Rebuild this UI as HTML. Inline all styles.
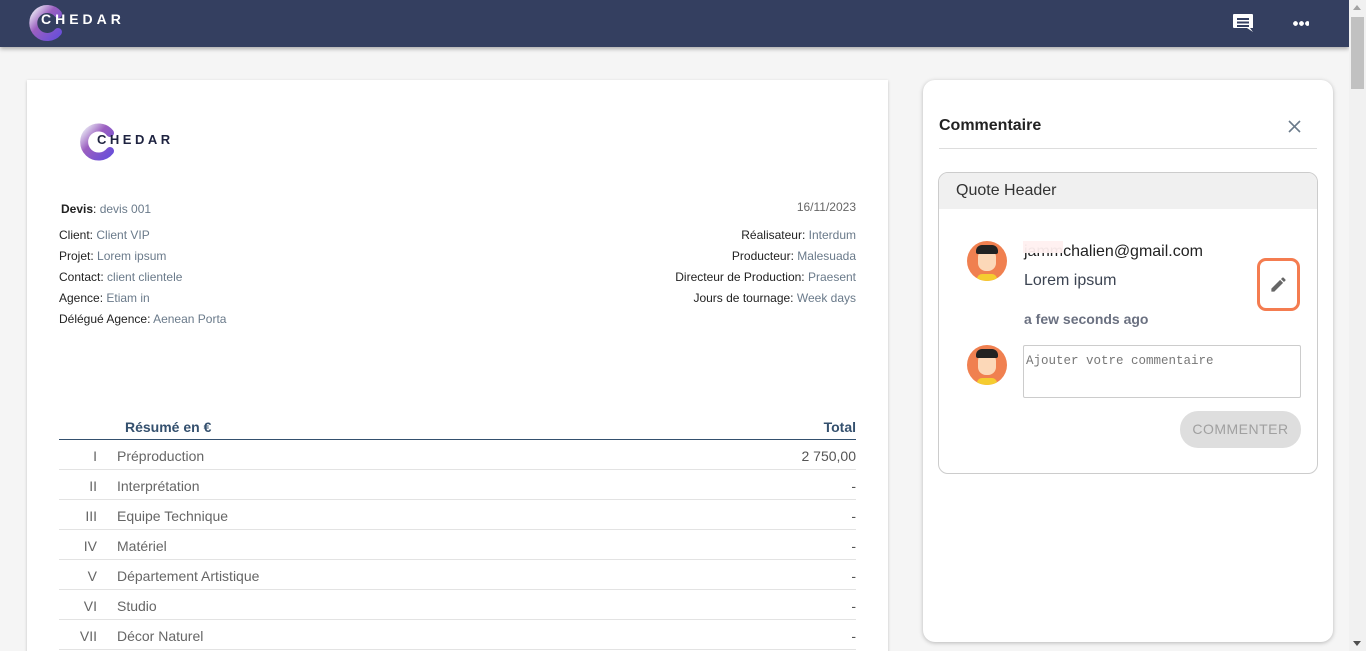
<!DOCTYPE html>
<html><head><meta charset="utf-8"><style>
*{box-sizing:border-box;margin:0;padding:0}
html,body{width:1366px;height:651px;overflow:hidden}
body{background:#f5f5f5;font-family:"Liberation Sans",Roboto,sans-serif;position:relative;color:#333}
.hdr{position:absolute;left:0;top:0;width:1349px;height:47px;background:#343f60;box-shadow:0 2px 4px rgba(0,0,0,.3)}
.sb{position:absolute;right:0;top:0;width:17px;height:651px;background:#f1f1f1}
.sb .th{position:absolute;left:2px;top:17px;width:13px;height:72px;background:#c1c1c1}
.card{position:absolute;left:27px;top:80px;width:861px;height:600px;background:#fff;box-shadow:0 1px 3px rgba(0,0,0,.2)}
.side{position:absolute;left:923px;top:80px;width:410px;height:562px;background:#fff;border-radius:12px;box-shadow:0 1px 4px rgba(0,0,0,.25)}
.t{position:absolute;font-size:12px;color:#222;white-space:nowrap}
.t span{color:#6a7a8a}
.r{text-align:right}
.row{position:absolute;left:59px;width:797px;height:30px;border-bottom:1px solid #e3e3e3;font-size:14px;color:#666}
.row .n{position:absolute;right:759px;top:8px}
.row .l{position:absolute;left:58px;top:8px}
.row .v{position:absolute;right:0;top:8px;color:#555}
</style></head><body>
<div class="hdr">
<svg style="position:absolute;left:25px;top:2px" width="42" height="42" viewBox="0 0 42 42"><defs><linearGradient id="g" x1="0" y1="0" x2="1" y2="1"><stop offset="0" stop-color="#e8e8f4"/><stop offset=".4" stop-color="#9b5fc0"/><stop offset="1" stop-color="#6a4fd8"/></linearGradient></defs><path d="M33 12 A14 14 0 1 0 33 30" fill="none" stroke="url(#g)" stroke-width="8" stroke-linecap="round"/></svg>
<div style="position:absolute;left:41px;top:11px;color:#fff;font-size:14px;font-weight:bold;letter-spacing:4px">CHEDAR</div>
<svg style="position:absolute;left:1233px;top:14px" width="20" height="19" viewBox="0 0 20 19"><path d="M1 0h18a1 1 0 0 1 1 1v13h-3l3 4-6-4H1a1 1 0 0 1-1-1V1a1 1 0 0 1 1-1z" fill="#fff"/><rect x="4" y="4" width="12" height="2" fill="#343f60"/><rect x="4" y="7.5" width="12" height="2" fill="#343f60"/><rect x="4" y="11" width="12" height="2" fill="#343f60"/></svg>
<div style="position:absolute;left:1293px;top:21px;width:16px;height:5px;background:radial-gradient(circle at 2.5px 2.5px,#fff 2.2px,transparent 2.5px) 0 0/6px 5px repeat-x"></div>
</div>
<div class="sb"><div class="th"></div><div style="position:absolute;left:4px;top:5px;border:4px solid transparent;border-bottom:5px solid #a3a3a3;border-top:0"></div><div style="position:absolute;left:4px;bottom:5px;border:4px solid transparent;border-top:5px solid #505050;border-bottom:0"></div></div>
<div class="card">
<svg style="position:absolute;left:49px;top:40px" width="44" height="44" viewBox="0 0 44 44"><path d="M34 13 A14.5 14.5 0 1 0 34 31" fill="none" stroke="url(#g)" stroke-width="8" stroke-linecap="round"/></svg>
<div style="position:absolute;left:70px;top:52px;color:#1e2340;font-size:13px;font-weight:bold;letter-spacing:3.5px">CHEDAR</div>
</div>
<div class="t" style="left:61px;top:202px"><b>Devis</b>: <span>devis 001</span></div>
<div class="t r" style="right:510px;top:200px;color:#666">16/11/2023</div>
<div class="t" style="left:59px;top:228px">Client: <span>Client VIP</span></div>
<div class="t" style="left:59px;top:249px">Projet: <span>Lorem ipsum</span></div>
<div class="t" style="left:59px;top:270px">Contact: <span>client clientele</span></div>
<div class="t" style="left:59px;top:291px">Agence: <span>Etiam in</span></div>
<div class="t" style="left:59px;top:312px">Délégué Agence: <span>Aenean Porta</span></div>
<div class="t r" style="right:510px;top:228px">Réalisateur: <span>Interdum</span></div>
<div class="t r" style="right:510px;top:249px">Producteur: <span>Malesuada</span></div>
<div class="t r" style="right:510px;top:270px">Directeur de Production: <span>Praesent</span></div>
<div class="t r" style="right:510px;top:291px">Jours de tournage: <span>Week days</span></div>
<div style="position:absolute;left:59px;top:410px;width:797px;height:30px;border-bottom:1px solid #34506e;font-size:14px;font-weight:bold;color:#34506e"><span style="position:absolute;left:66px;top:9px">Résumé en €</span><span style="position:absolute;right:0;top:9px">Total</span></div>
<div class="row" style="top:440px"><span class="n">I</span><span class="l">Préproduction</span><span class="v">2 750,00</span></div>
<div class="row" style="top:470px"><span class="n">II</span><span class="l">Interprétation</span><span class="v">-</span></div>
<div class="row" style="top:500px"><span class="n">III</span><span class="l">Equipe Technique</span><span class="v">-</span></div>
<div class="row" style="top:530px"><span class="n">IV</span><span class="l">Matériel</span><span class="v">-</span></div>
<div class="row" style="top:560px"><span class="n">V</span><span class="l">Département Artistique</span><span class="v">-</span></div>
<div class="row" style="top:590px"><span class="n">VI</span><span class="l">Studio</span><span class="v">-</span></div>
<div class="row" style="top:620px"><span class="n">VII</span><span class="l">Décor Naturel</span><span class="v">-</span></div>
<div class="side">
<div style="position:absolute;left:16px;top:37px;font-size:16px;font-weight:bold;color:#222">Commentaire</div>
<svg style="position:absolute;left:365px;top:40px" width="13" height="13" viewBox="0 0 13 13"><path d="M1 1L12 12M12 1L1 12" stroke="#6a7a8a" stroke-width="1.6"/></svg>
<div style="position:absolute;left:16px;top:68px;width:378px;height:1px;background:#ddd"></div>
<div style="position:absolute;left:15px;top:92px;width:380px;height:302px;border:1px solid #ccc;border-radius:10px;overflow:hidden">
<div style="height:36px;background:#f0f0f0;font-size:16px;color:#333;padding:9px 0 0 17px">Quote Header</div>
<div style="position:absolute;left:28px;top:68px;width:40px;height:40px;border-radius:50%;background:#f08050;overflow:hidden"><div style="position:absolute;left:11px;top:8px;width:18px;height:22px;background:#fcd8b8;border-radius:8px"></div><div style="position:absolute;left:9px;top:4px;width:22px;height:9px;background:#222;border-radius:6px 6px 2px 2px"></div><div style="position:absolute;left:10px;top:33px;width:20px;height:10px;background:#f5cc30;border-radius:6px"></div></div>
<div style="position:absolute;left:85px;top:70px;font-size:16px;color:#222">jammchalien@gmail.com</div>
<div style="position:absolute;left:84px;top:68px;width:40px;height:12px;background:rgba(255,240,240,.95)"></div>
<div style="position:absolute;left:85px;top:99px;font-size:16px;color:#3c4452">Lorem ipsum</div>
<div style="position:absolute;left:85px;top:138px;font-size:14px;font-weight:bold;color:#6a7080">a few seconds ago</div>
<div style="position:absolute;left:318px;top:85px;width:43px;height:53px;border:3px solid #f47c50;border-radius:9px"><svg style="position:absolute;left:9px;top:14px" width="19" height="19" viewBox="0 0 24 24"><path d="M3 17.25V21h3.75L17.8 9.94l-3.75-3.75L3 17.25zM20.7 7.04a1 1 0 0 0 0-1.41l-2.34-2.34a1 1 0 0 0-1.41 0l-1.83 1.83 3.75 3.75 1.83-1.83z" fill="#666"/></svg></div>
<div style="position:absolute;left:28px;top:172px;width:40px;height:40px;border-radius:50%;background:#f08050;overflow:hidden"><div style="position:absolute;left:11px;top:8px;width:18px;height:22px;background:#fcd8b8;border-radius:8px"></div><div style="position:absolute;left:9px;top:4px;width:22px;height:9px;background:#222;border-radius:6px 6px 2px 2px"></div><div style="position:absolute;left:10px;top:33px;width:20px;height:10px;background:#f5cc30;border-radius:6px"></div></div>
<div style="position:absolute;left:84px;top:172px;width:278px;height:53px;border:1px solid #ccc;border-radius:2px;font-family:'Liberation Mono',monospace;font-size:12.5px;color:#777;padding:8px 2px">Ajouter votre commentaire</div>
<div style="position:absolute;left:241px;top:238px;width:121px;height:37px;background:#dedede;border-radius:18px;color:#a0a0a0;font-size:14px;text-align:center;line-height:37px;letter-spacing:.5px">COMMENTER</div>
</div>
</div>
</body></html>
